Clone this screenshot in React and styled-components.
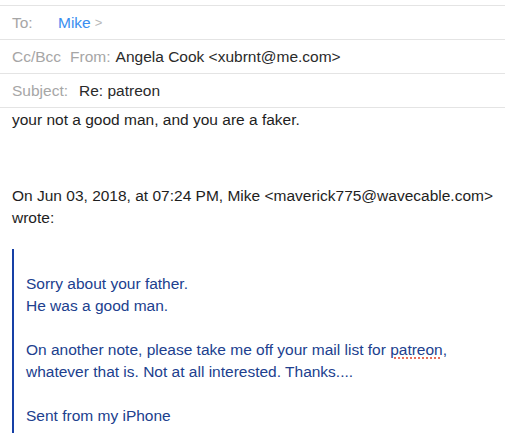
import React from 'react'
import styled, { createGlobalStyle } from 'styled-components'

const GlobalStyle = createGlobalStyle`
    body {
        margin: 0;
        background: #ffffff;
        font-family: "Liberation Sans", Arial, sans-serif;
    }
`;

/****************** HEADER ******************/

const Header = styled.div`
    padding-top: 5px;
`;

const HeaderRow = styled.div`
    display: flex;
    align-items: center;
    height: 33px;
    padding-left: 12px;
    border-top: 1px solid #e4e4e4;
    font-size: 15.5px;
    &:last-child {
        border-bottom: 1px solid #e4e4e4;
    }
`;

const Label = styled.span`
    color: #a6a6a6;
    width: ${props => props.width || "auto"};
    margin-right: ${props => props.gap || "6px"};
`;

const Value = styled.span`
    color: ${props => props.link ? "#3a8ef0" : "#2a2a2a"};
`;

const Chevron = styled.span`
    color: #b8b8b8;
    margin-left: 4px;
    font-size: 13px;
`;

/****************** BODY ******************/

const Body = styled.div`
    padding: 1px 8px 0 12px;
    font-size: 15.5px;
    line-height: 22px;
    color: #1e1e1e;
`;

const Paragraph = styled.p`
    margin: 0 0 ${props => props.spaceAfter || "0"} 0;
`;

const Quote = styled.blockquote`
    margin: 0;
    padding: 24px 0 8px 12px;
    border-left: 2px solid #1640a6;
    color: #20408e;
`;

const Misspelled = styled.span`
    text-decoration: underline dotted #e0442c;
    text-underline-offset: 3px;
`;

function App() {
    return (
        <>
            <GlobalStyle />
            <Header>
                <HeaderRow>
                    <Label width="46px" gap="0">To:</Label>
                    <Value link>Mike</Value>
                    <Chevron>&gt;</Chevron>
                </HeaderRow>
                <HeaderRow>
                    <Label gap="9px">Cc/Bcc</Label>
                    <Label gap="5px">From:</Label>
                    <Value>Angela Cook &lt;xubrnt@me.com&gt;</Value>
                </HeaderRow>
                <HeaderRow>
                    <Label gap="11px">Subject:</Label>
                    <Value>Re: patreon</Value>
                </HeaderRow>
            </Header>
            <Body>
                <Paragraph spaceAfter="54px">your not a good man, and you are a faker.</Paragraph>
                <Paragraph spaceAfter="20px">
                    On Jun 03, 2018, at 07:24 PM, Mike &lt;maverick775@wavecable.com&gt; wrote:
                </Paragraph>
                <Quote>
                    <Paragraph>Sorry about your father.</Paragraph>
                    <Paragraph spaceAfter="22px">He was a good man.</Paragraph>
                    <Paragraph spaceAfter="22px">
                        On another note, please take me off your mail list for <Misspelled>patreon</Misspelled>, whatever that is. Not at all interested. Thanks....
                    </Paragraph>
                    <Paragraph>Sent from my iPhone</Paragraph>
                </Quote>
            </Body>
        </>
    );
}

export default App;
